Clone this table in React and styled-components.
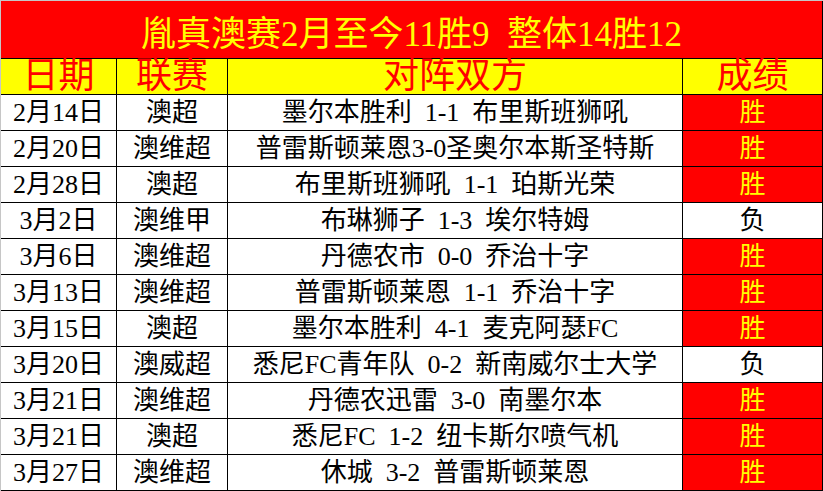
import React from "react";
import styled, { createGlobalStyle, css } from "styled-components";

const GlobalStyle = createGlobalStyle`
  html, body {
    margin: 0;
    padding: 0;
    background: #fff;
  }
`;

const FONT = `"Liberation Serif", "Noto Sans CJK SC", serif`;

const Sheet = styled.div`
  display: grid;
  grid-template-columns: 116px 111px 455px 140px;
  width: 823px;
  border-top: 1px solid #c6c6c6;
  border-left: 1px solid #c6c6c6;
  box-sizing: border-box;
  font-family: ${FONT};
`;

const Title = styled.div`
  grid-column: 1 / -1;
  height: 55px;
  padding-top: 2px;
  background: #ff0000;
  color: #ffff00;
  font-size: 35px;
  display: flex;
  align-items: center;
  justify-content: center;
  white-space: pre;
  border-right: 1px solid #000;
  border-bottom: 1px solid #000;
`;

const Cell = styled.div`
  height: 35px;
  display: flex;
  align-items: center;
  justify-content: center;
  white-space: pre;
  overflow: hidden;
  border-right: 1px solid #000;
  border-bottom: 1px solid #000;
  font-size: 26px;
  line-height: 35px;
  color: #000;
  background: #fff;
  ${({ $head }) =>
    $head &&
    css`
      background: #ffff00;
      color: #ff0000;
      font-size: 36px;
      overflow: visible;
    `}
  ${({ $win }) =>
    $win &&
    css`
      background: #ff0000;
      color: #ffff00;
    `}
`;

// SimSun-style half-width spaces
const wide = (s) => s.replace(/ /g, "\u2002");

const rows = [
  ["2月14日", "澳超", "墨尔本胜利 1-1 布里斯班狮吼", true],
  ["2月20日", "澳维超", "普雷斯顿莱恩3-0圣奥尔本斯圣特斯", true],
  ["2月28日", "澳超", "布里斯班狮吼 1-1 珀斯光荣", true],
  ["3月2日", "澳维甲", "布琳狮子 1-3 埃尔特姆", false],
  ["3月6日", "澳维超", "丹德农市 0-0 乔治十字", true],
  ["3月13日", "澳维超", "普雷斯顿莱恩 1-1 乔治十字", true],
  ["3月15日", "澳超", "墨尔本胜利 4-1 麦克阿瑟FC", true],
  ["3月20日", "澳威超", "悉尼FC青年队 0-2 新南威尔士大学", false],
  ["3月21日", "澳维超", "丹德农迅雷 3-0 南墨尔本", true],
  ["3月21日", "澳超", "悉尼FC 1-2 纽卡斯尔喷气机", true],
  ["3月27日", "澳维超", "休城 3-2 普雷斯顿莱恩", true],
];

export default function App() {
  return (
    <>
      <GlobalStyle />
      <Sheet>
        <Title>{wide("胤真澳赛2月至今11胜9 整体14胜12")}</Title>
        <Cell $head>日期</Cell>
        <Cell $head>联赛</Cell>
        <Cell $head>对阵双方</Cell>
        <Cell $head>成绩</Cell>
        {rows.map(([date, league, match, win], i) => (
          <React.Fragment key={i}>
            <Cell>{date}</Cell>
            <Cell>{league}</Cell>
            <Cell>{wide(match)}</Cell>
            <Cell $win={win}>{win ? "胜" : "负"}</Cell>
          </React.Fragment>
        ))}
      </Sheet>
    </>
  );
}
